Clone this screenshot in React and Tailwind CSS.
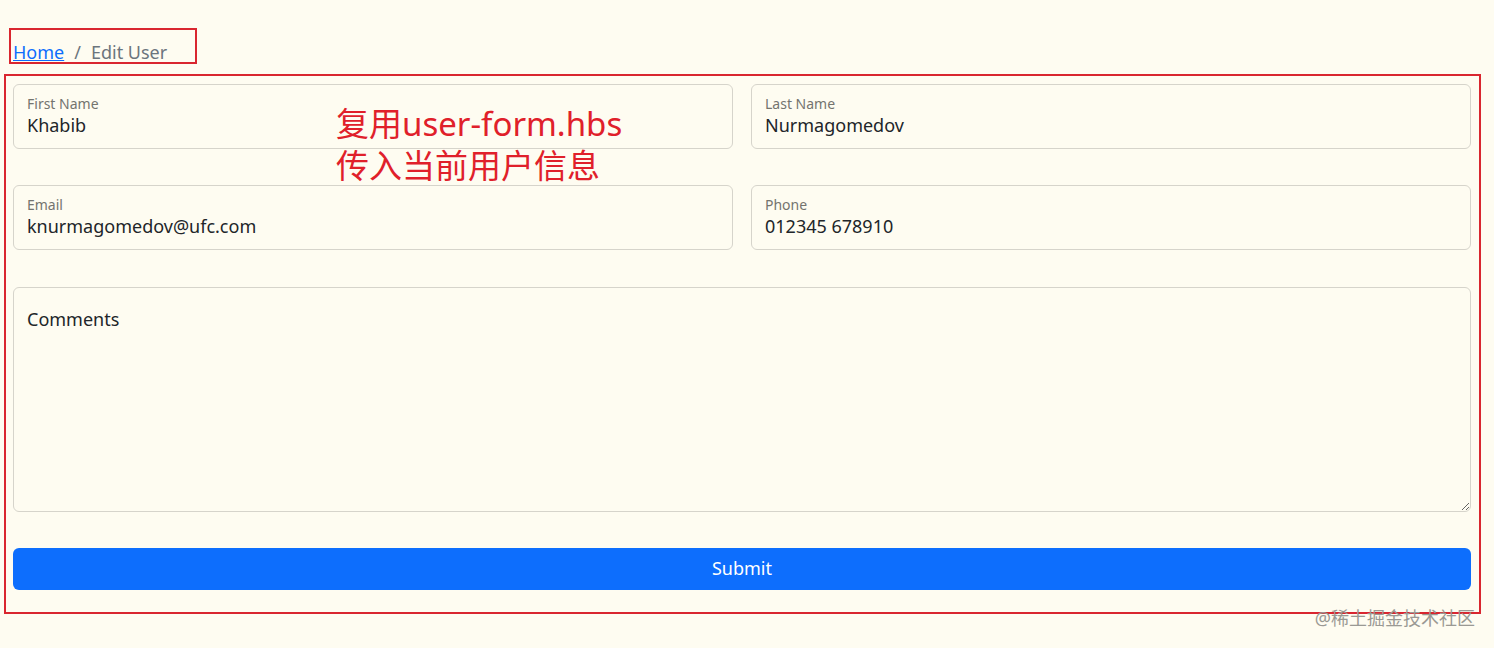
import React from 'react';

const fields = [
  { label: 'First Name', value: 'Khabib' },
  { label: 'Last Name', value: 'Nurmagomedov' },
  { label: 'Email', value: 'knurmagomedov@ufc.com' },
  { label: 'Phone', value: '012345 678910' },
];

function FloatingField({ label, value }) {
  return (
    <div className="h-[65px] border border-[#d6d4cb] rounded-[6px] px-[13px] pt-[10px]">
      <div className="text-[14px] leading-[18px] text-[#74746f]">{label}</div>
      <div className="text-[18px] leading-[24px] text-[#212529]">{value}</div>
    </div>
  );
}

export default function App() {
  return (
    <div
      className="relative min-h-[648px] bg-[#fefcf1] overflow-hidden"
      style={{ fontFamily: '"Noto Sans", "Noto Sans CJK SC", sans-serif' }}
    >
      <div className="pl-[13px] pr-[23px] pt-[40px]">
        {/* breadcrumb */}
        <div className="h-[24px] leading-[24px] text-[18px] mb-[20px] flex items-center">
          <a href="#" className="text-[#0d6efd] underline">Home</a>
          <span className="pl-[10px] pr-[10px] text-[#6c757d]">/</span>
          <span className="text-[#6c757d]">Edit User</span>
        </div>

        {/* form */}
        <form className="grid grid-cols-2 gap-x-[18px] gap-y-[36px]">
          {fields.map((f) => (
            <FloatingField key={f.label} {...f} />
          ))}
          <textarea
            readOnly
            placeholder="Comments"
            className="col-span-2 mt-[1px] h-[225px] border border-[#d6d4cb] rounded-[6px] bg-transparent px-[13px] pt-[19px] text-[18px] leading-[24px] text-[#212529] placeholder:text-[#212529] outline-none"
          />
          <button
            type="button"
            className="col-span-2 h-[42px] rounded-[6px] bg-[#0d6efd] text-white text-[18px] leading-[24px] pb-[2px]"
          >
            Submit
          </button>
        </form>
      </div>

      {/* annotations */}
      <div className="absolute left-[9px] top-[28px] w-[188px] h-[36px] border-2 border-[#d9262f] pointer-events-none" />
      <div className="absolute left-[4px] top-[74px] w-[1477px] h-[540px] border-2 border-[#d9262f] pointer-events-none" />
      <div className="absolute left-[336px] top-[103px] text-[33px] leading-[42px] text-[#e0202a] pointer-events-none">
        <div>复用user-form.hbs</div>
        <div>传入当前用户信息</div>
      </div>

      {/* watermark */}
      <div className="absolute right-[19px] top-[606px] text-[18px] leading-[24px] text-[#9a9994]">
        @稀土掘金技术社区
      </div>
    </div>
  );
}
